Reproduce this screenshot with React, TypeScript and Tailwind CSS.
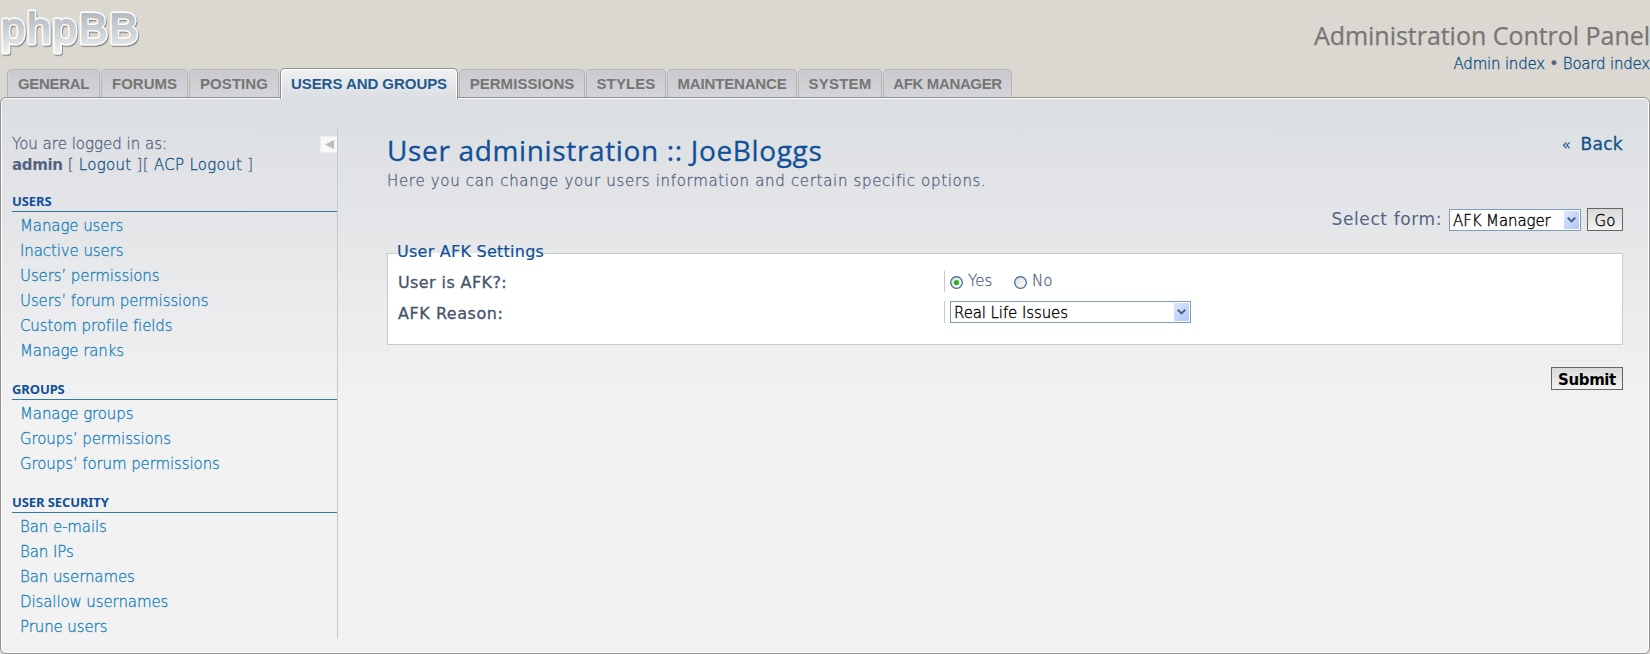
import React from 'react';

const tabs = [
  { label: 'GENERAL', box: 'w-[93px]', text: 'tracking-[-0.3px]' },
  { label: 'FORUMS', box: 'w-[87px]', text: 'tracking-[0px]' },
  { label: 'POSTING', box: 'w-[90px]', text: 'tracking-[0.05px]' },
  { label: 'USERS AND GROUPS', box: 'w-[178px]', text: 'tracking-[-0.05px]', active: true },
  { label: 'PERMISSIONS', box: 'w-[126px]', text: 'tracking-[0.05px]' },
  { label: 'STYLES', box: 'w-[80px]', text: 'tracking-[0.1px]' },
  { label: 'MAINTENANCE', box: 'w-[130px]', text: 'tracking-[-0.15px]' },
  { label: 'SYSTEM', box: 'w-[84px]', text: 'tracking-[0.2px]' },
  { label: 'AFK MANAGER', box: 'w-[129px]', text: 'tracking-[-0.35px]' },
];

const menu = [
  {
    title: 'USERS',
    items: ['Manage users', 'Inactive users', 'Users’ permissions', 'Users’ forum permissions', 'Custom profile fields', 'Manage ranks'],
  },
  { title: 'GROUPS', items: ['Manage groups', 'Groups’ permissions', 'Groups’ forum permissions'] },
  { title: 'USER SECURITY', items: ['Ban e-mails', 'Ban IPs', 'Ban usernames', 'Disallow usernames', 'Prune users'] },
];

function Logo() {
  return (
    <svg width="142" height="58" viewBox="0 0 142 58" className="block">
      <defs>
        <linearGradient id="logoFill" x1="0" y1="10" x2="0" y2="54" gradientUnits="userSpaceOnUse">
          <stop offset="0" stopColor="#b0b6ba" />
          <stop offset="0.5" stopColor="#ccd2d5" />
          <stop offset="1" stopColor="#f0f3f4" />
        </linearGradient>
        <filter id="logoShadow" x="-5%" y="-10%" width="115%" height="130%">
          <feDropShadow dx="0.8" dy="1.2" stdDeviation="0.7" floodColor="#666" floodOpacity="0.8" />
        </filter>
        <text
          id="wordmark"
          x="1"
          y="43"
          textLength="137"
          lengthAdjust="spacing"
          strokeLinejoin="round"
          className="font-['Liberation_Sans',sans-serif] text-[43px] font-normal"
        >
          phpBB
        </text>
      </defs>
      <use href="#wordmark" fill="#fff" stroke="#fff" strokeWidth="5" filter="url(#logoShadow)" />
      <use href="#wordmark" fill="url(#logoFill)" stroke="url(#logoFill)" strokeWidth="2" />
    </svg>
  );
}

function Tab({ label, box, text, active }: { label: string; box: string; text: string; active?: boolean }) {
  return active ? (
    <a className={`${box} flex h-[31px] justify-center rounded-t-[5px] border border-b-0 border-[#8f8f8f] bg-linear-to-b from-[#eff0f1] to-[#dbdfe2] pt-[5px] text-[#23598f] shadow-[inset_1px_1px_0_#fff,inset_-1px_0_0_#fff]`}>
      <span className={text}>{label}</span>
    </a>
  ) : (
    <a className={`${box} mt-px flex h-7 justify-center rounded-t-[5px] border border-b-0 border-[#b5b5b5] bg-linear-to-b from-[#c9cacd] to-[#d4d5d8] pt-1 text-[#757575] shadow-[inset_1px_1px_0_#d2d3d5]`}>
      <span className={text}>{label}</span>
    </a>
  );
}

function SelectBox({ value, className }: { value: string; className: string }) {
  return (
    <div className={`${className} flex h-[22px] items-center justify-between border border-[#7f9db9] bg-white pr-px pl-[3px] text-black`}>
      <span className="pt-[2px] leading-[18px] font-extralight tracking-[-0.1px] whitespace-nowrap [-webkit-text-stroke:0.35px_#000]">{value}</span>
      <span className="flex h-[18px] w-[15px] items-center justify-center rounded-[1px] bg-linear-to-br from-[#dbe6fe] to-[#b3c8f7]">
        <svg width="9" height="6" viewBox="0 0 9 6">
          <path d="M0.8 0.8 L4.5 4.4 L8.2 0.8" fill="none" stroke="#4d6185" strokeWidth="2" />
        </svg>
      </span>
    </div>
  );
}

function Radio({ checked }: { checked?: boolean }) {
  return (
    <svg width="13" height="13" viewBox="0 0 13 13" className="mt-[5px] block shrink-0">
      <defs>
        <linearGradient id="radioFill" x1="0" y1="0" x2="1" y2="1">
          <stop offset="0" stopColor="#dcdcd7" />
          <stop offset="1" stopColor="#ffffff" />
        </linearGradient>
      </defs>
      <circle cx="6.5" cy="6.5" r="5.8" fill="url(#radioFill)" stroke="#3b6291" strokeWidth="1.2" />
      {checked && <circle cx="6.5" cy="6.5" r="2.6" fill="#2fb12f" />}
    </svg>
  );
}

export default function App() {
  return (
    <div className="flex h-[654px] w-[1650px] flex-col overflow-hidden bg-[#dbd8d1] font-['DejaVu_Sans',sans-serif] text-[15px] text-[#536482]">
      <header className="flex h-[68px] justify-between">
        <Logo />
        <div className="flex flex-col items-end pt-[17px] whitespace-nowrap">
          <h1 className="font-['Open_Sans',sans-serif] text-[25px] leading-9 tracking-[-0.03px] text-[#767676] [-webkit-text-stroke:0.25px]">
            Administration Control Panel
          </h1>
          <p className="mt-px text-[15px] leading-5 font-extralight tracking-[-0.2px] [-webkit-text-stroke:0.35px]">
            <a className="text-[#105289]">Admin index</a> <b className="font-normal">•</b> <a className="text-[#105289]">Board index</a>
          </p>
        </div>
      </header>

      <nav className="relative z-10 -mb-[2px] flex h-[31px] gap-px pl-[7px] font-['Liberation_Sans',sans-serif] text-[15px] leading-5 font-bold whitespace-nowrap">
        {tabs.map((t) => (
          <Tab key={t.label} {...t} />
        ))}
      </nav>

      <main className="flex h-[557px] rounded-[6px] border border-[#8f8f8f] bg-linear-to-b from-[#dbdfe2] via-[#e3e4e7] via-[18%] to-[#f2f2f2] to-[56%] shadow-[inset_0_0_0_1px_#fff]">
        <aside className="mt-[30px] ml-[11px] h-[511px] w-[326px] border-r border-[#c6cacc]">
          <div className="flex h-[47px] justify-between pt-[6px]">
            <div className="text-[15px] leading-[21px] whitespace-nowrap">
              <p className="font-extralight [-webkit-text-stroke:0.3px]">You are logged in as:</p>
              <p className="font-extralight tracking-[0.3px] [-webkit-text-stroke:0.3px]">
                <b className="font-bold tracking-[-0.35px] [-webkit-text-stroke:0px]">admin</b> [ <a className="text-[#105289]">Logout</a> ][{' '}
                <a className="text-[#105289]">ACP Logout</a> ]
              </p>
            </div>
            <span className="mt-[2px] flex h-[17px] w-[17px] items-center justify-center border border-r-0 border-[#e9ebec] bg-[#f7f8f8]">
              <svg width="9" height="9" viewBox="0 0 9 9">
                <path d="M9 0 L9 9 L0 4.5 Z" fill="#bcbcbc" />
              </svg>
            </span>
          </div>
          {menu.map((group) => (
            <section key={group.title}>
              <h2 className="flex h-[37px] items-end border-b border-[#327aa5] pb-[1px] font-['Noto_Sans',sans-serif] text-[13px] leading-[18px] font-bold tracking-[-0.1px] text-[#115098]">
                {group.title}
              </h2>
              <ul className="-mb-px pt-[2px] pl-2 leading-[25px] font-extralight tracking-[-0.1px] text-[#1580b8] [-webkit-text-stroke:0.3px]">
                {group.items.map((item) => (
                  <li key={item}>{item}</li>
                ))}
              </ul>
            </section>
          ))}
        </aside>

        <div className="ml-[49px] flex w-[1236px] flex-col pt-[31px]">
          <div className="flex h-[79px] justify-between whitespace-nowrap">
            <div>
              <h1 className="font-['Open_Sans',sans-serif] text-[28px] leading-[42px] tracking-[0.65px] text-[#115098] [-webkit-text-stroke:0.3px]">
                User administration :: JoeBloggs
              </h1>
              <p className="-mt-px font-extralight tracking-[0.68px] [-webkit-text-stroke:0.3px]">
                Here you can change your users information and certain specific options.
              </p>
            </div>
            <a className="pt-0.5 text-[17px] leading-[26px] text-[#105289]">
              <span className="mr-1 text-[15px]">«</span>
              <span className="tracking-[0.3px] [-webkit-text-stroke:0.3px]"> Back</span>
            </a>
          </div>

          <div className="flex h-[23px] items-end justify-end">
            <span className="mr-[7px] text-[17px] leading-6 tracking-[0.6px] whitespace-nowrap">Select form:</span>
            <SelectBox value="AFK Manager" className="w-[132px]" />
            <button className="ml-[6px] h-[23px] w-9 border border-[#666] bg-linear-to-b from-[#d9d9d9] to-[#f2f2f2] pt-[2px] leading-5 font-extralight text-black [-webkit-text-stroke:0.35px_#000]">
              Go
            </button>
          </div>

          <fieldset className="mt-[12px] h-[102px] border border-[#c9cacb] bg-white pl-[9px]">
            <legend className="text-[16px] leading-[18px] tracking-[0.25px] text-[#115098] [-webkit-text-stroke:0.2px]">
              <span className="block h-5">User AFK Settings</span>
            </legend>
            <div className="grid grid-cols-[547px_1fr] gap-y-2 pt-[8px]">
              <span className="pt-0.5 pl-px text-[16px] leading-[20px] tracking-[0.4px] text-[#47536b] [-webkit-text-stroke:0.3px]">User is AFK?:</span>
              <div className="flex h-[21px] border-l border-[#c6cacc] pl-[5px] leading-[20px] font-extralight [-webkit-text-stroke:0.3px]">
                <Radio checked />
                <span className="ml-[5px] w-[46px]">Yes</span>
                <Radio />
                <span className="ml-[5px]">No</span>
              </div>
              <span className="pl-px text-[16px] leading-[25px] tracking-[0.55px] text-[#47536b] [-webkit-text-stroke:0.3px]">AFK Reason:</span>
              <div className="h-[22px] border-l border-[#c6cacc] pl-[5px]">
                <SelectBox value="Real Life Issues" className="w-[241px]" />
              </div>
            </div>
          </fieldset>

          <div className="mt-[22px] flex justify-end">
            <button className="h-[23px] w-[72px] border border-[#666] bg-linear-to-b from-[#d9d9d9] to-[#f2f2f2] pt-[2px] leading-5 font-bold tracking-[-0.4px] text-black">
              Submit
            </button>
          </div>
        </div>
      </main>
    </div>
  );
}
